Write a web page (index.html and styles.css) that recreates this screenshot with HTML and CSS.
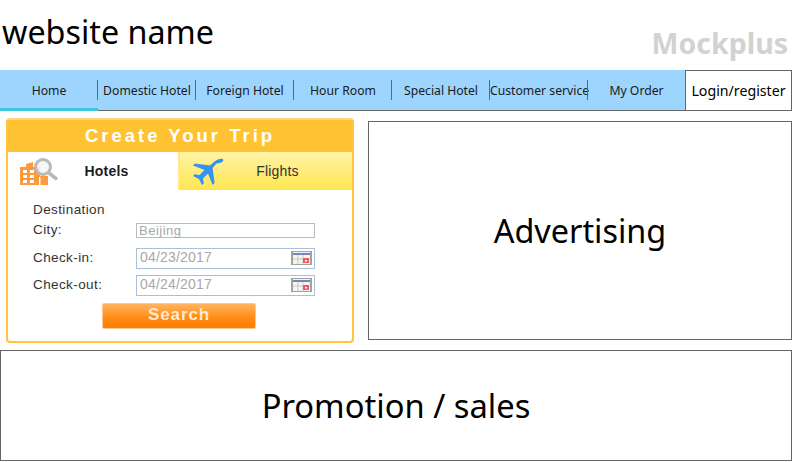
FILE: index.html
```html
<!DOCTYPE html>
<html lang="en">
<head>
  <meta charset="UTF-8">
  <title>website name</title>
  <meta name="viewport" content="width=device-width, initial-scale=1.0">
  <link rel="stylesheet" href="styles.css">
</head>
<body>
  <!-- Header -->
  <header class="siteHeader">
    <div class="siteName">website name</div>
    <div class="brand">Mockplus</div>
  </header>

  <!-- Nav -->
  <nav class="navBar">
    <ul class="navList">
      <li class="navItem active">Home</li>
      <li class="navItem">Domestic Hotel</li>
      <li class="navItem">Foreign Hotel</li>
      <li class="navItem">Hour Room</li>
      <li class="navItem">Special Hotel</li>
      <li class="navItem">Customer service</li>
      <li class="navItem">My Order</li>
    </ul>
    <div class="loginBox">Login/register</div>
  </nav>

  <!-- Search widget and advertising -->
  <main class="mainRow">
    <section class="tripWidget">
      <h2 class="tripTitle">Create Your Trip</h2>
      <div class="tabs">
        <div class="tab tabHotels">
          <svg class="tabIcon" width="40" height="30" viewBox="0 0 40 30">
            <path d="M1 29V11h6V8l7-2v5h7v9h8v9z" fill="#ff9a3c"/>
            <g fill="#fff">
              <rect x="4" y="14" width="4" height="3"/><rect x="11" y="14" width="4" height="3"/>
              <rect x="4" y="19" width="4" height="3"/><rect x="11" y="19" width="4" height="3"/>
              <rect x="4" y="24" width="4" height="3"/><rect x="11" y="24" width="4" height="3"/>
              <rect x="20" y="21" width="1.5" height="8"/>
            </g>
            <circle cx="24" cy="11" r="7.5" fill="#f4f4f4" fill-opacity="0.85" stroke="#b9b9b9" stroke-width="3"/>
            <path d="M30 17l7 5.500" stroke="#b9b9b9" stroke-width="3.500" stroke-linecap="round"/>
          </svg>
          <span class="tabLabel">Hotels</span>
        </div>
        <div class="tab tabFlights">
          <svg class="tabIcon" width="32" height="28" viewBox="0 0 32 28">
            <path d="M31 1c-3-.6-6 .6-8.500 2.600L18 7.500 3 5.500 1 7.500 12.500 12 7.500 17l-5-.8L1 18l6 3 3 6 1.800-1.500-.8-5 5-5 4.600 11.500 2-2-2-15 3.900-4.500C31 5 31.600 3 31 1z" fill="#3593ee"/>
          </svg>
          <span class="tabLabel">Flights</span>
        </div>
      </div>

      <form class="tripForm">
        <div class="formHeading">Destination</div>
        <div class="formRow cityRow">
          <label class="formLabel">City:</label>
          <div class="textInput">Beijing</div>
        </div>
        <div class="formRow dateRow">
          <label class="formLabel">Check-in:</label>
          <div class="dateInput">
            04/23/2017
            <svg class="calIcon" width="21" height="14" viewBox="0 0 21 14">
              <rect width="21" height="14" fill="#a3a39a"/>
              <rect x="2" y="1" width="17" height="12" fill="#f4f4f0"/>
              <rect x="2" y="2" width="17" height="2" fill="#6f86c8"/>
              <path d="M7 4v9M12 4v9M2 8h17" stroke="#c9c9c9"/>
              <rect x="12" y="7" width="6" height="5" fill="#ee5a68"/>
              <rect x="14" y="9" width="2" height="1.500" fill="#fff"/>
            </svg>
          </div>
        </div>
        <div class="formRow dateRow">
          <label class="formLabel">Check-out:</label>
          <div class="dateInput">
            04/24/2017
            <svg class="calIcon" width="21" height="14" viewBox="0 0 21 14">
              <rect width="21" height="14" fill="#a3a39a"/>
              <rect x="2" y="1" width="17" height="12" fill="#f4f4f0"/>
              <rect x="2" y="2" width="17" height="2" fill="#6f86c8"/>
              <path d="M7 4v9M12 4v9M2 8h17" stroke="#c9c9c9"/>
              <rect x="12" y="7" width="6" height="5" fill="#ee5a68"/>
              <rect x="14" y="9" width="2" height="1.500" fill="#fff"/>
            </svg>
          </div>
        </div>
        <div class="searchBtn">Search</div>
      </form>
    </section>

    <section class="adBox">Advertising</section>
  </main>

  <section class="promoBox">Promotion / sales</section>
</body>
</html>
```

FILE: styles.css
```css
/* Base Styles */
body {
  margin: 0;
  padding: 0;
  width: 793px;
  background: #fff;
  color: #000;
  font-family: "Noto Sans", "Open Sans", sans-serif;
}
/* Header */
.siteHeader {
  height: 70px;
  box-sizing: border-box;
  display: flex;
  justify-content: space-between;
  padding: 9px 5px 0 2px;
}
.siteName {
  font-size: 32.300px;
  line-height: 44px;
}
.brand {
  font-size: 28.500px;
  font-weight: 700;
  line-height: 40px;
  margin-top: 14px;
  color: #d2d2d2;
}
/* Nav */
.navBar {
  display: flex;
  height: 41px;
  width: 792px;
  box-sizing: border-box;
}
.navList {
  display: flex;
  width: 685px;
  margin: 0;
  padding: 0;
  box-sizing: border-box;
  list-style: none;
  background: #9dd5ff;
  border-bottom: 1px solid #666;
}
.navItem {
  position: relative;
  width: 98px;
  height: 41px;
  font-size: 12.200px;
  line-height: 41px;
  text-align: center;
  white-space: nowrap;
  color: #1a1a1a;
}
.navItem + .navItem::before {
  content: "";
  position: absolute;
  left: -1px;
  top: 10px;
  height: 20px;
  width: 1px;
  background: #666;
}
.navItem:last-child {
  width: 97px;
}
.navItem.active {
  box-shadow: inset 0 -3px 0 #3cc7dd;
}
.loginBox {
  flex: 1;
  box-sizing: border-box;
  border: 1px solid #666;
  font-size: 14.200px;
  line-height: 39px;
  text-align: center;
}
/* Main row */
.mainRow {
  display: flex;
  align-items: flex-start;
  width: 792px;
  padding: 7px 0 0 6px;
  box-sizing: border-box;
}
.tripWidget {
  width: 348px;
  height: 225px;
  box-sizing: border-box;
  border: 2px solid #ffc53d;
  border-top-color: #ffd27f;
  border-radius: 4px;
  font-family: "Liberation Sans", Arial, sans-serif;
}
.tripTitle {
  margin: 0;
  height: 32px;
  background: #ffc233;
  color: #fff;
  font-size: 18.500px;
  font-weight: 700;
  letter-spacing: 3px;
  line-height: 32px;
  text-align: center;
}
.tabs {
  display: flex;
  height: 38px;
}
.tab {
  position: relative;
  box-sizing: border-box;
  display: flex;
  align-items: center;
  justify-content: center;
  font-size: 14px;
  letter-spacing: 0.200px;
}
.tabHotels {
  width: 170px;
  font-weight: 700;
  padding-left: 27px;
  color: #1c1c28;
}
.tabFlights {
  flex: 1;
  padding-left: 23px;
  border-left: 2px solid #ffe98a;
  background: linear-gradient(#fff4a6, #ffe650);
  color: #333;
}
.tabIcon {
  position: absolute;
  left: 11px;
  top: 4px;
}
.tabFlights .tabIcon {
  left: 12px;
  top: 6px;
}
/* Form */
.tripForm {
  padding: 12px 0 0 25px;
  font-size: 13.500px;
  letter-spacing: 0.400px;
  color: #333;
}
.formHeading {
  line-height: 16px;
}
.formRow {
  display: flex;
  align-items: center;
}
.cityRow {
  height: 17px;
  margin-top: 4px;
}
.dateRow {
  height: 21px;
  margin-top: 6px;
}
.cityRow + .dateRow {
  margin-top: 9px;
}
.formLabel {
  width: 103px;
  padding-bottom: 2px;
}
.textInput {
  width: 179px;
  height: 15px;
  box-sizing: border-box;
  border: 1px solid #bbb;
  padding-left: 2px;
  font-size: 13px;
  letter-spacing: 0.500px;
  line-height: 13px;
  color: #a8a8a8;
}
.dateInput {
  position: relative;
  width: 179px;
  height: 21px;
  box-sizing: border-box;
  border: 1px solid #a9c0d8;
  padding-left: 3px;
  font-size: 14px;
  line-height: 17px;
  letter-spacing: 0.200px;
  color: #a8a8a8;
}
.calIcon {
  position: absolute;
  right: 2px;
  top: 2px;
}
.searchBtn {
  width: 154px;
  height: 26px;
  box-sizing: border-box;
  margin: 7px 0 0 69px;
  border: 1px solid #ffc890;
  border-radius: 2px;
  background: linear-gradient(#ffb45e, #ff8a14 60%, #ff8000);
  color: #ffe9d0;
  font-size: 17px;
  font-weight: 700;
  letter-spacing: 0.900px;
  line-height: 22px;
  text-align: center;
}
/* Placeholders */
.adBox {
  width: 424px;
  height: 219px;
  margin: 3px 0 0 14px;
  box-sizing: border-box;
  border: 1px solid #666;
  font-size: 32.400px;
  line-height: 217px;
  text-align: center;
}
.promoBox {
  width: 792px;
  height: 111px;
  margin-top: 7px;
  box-sizing: border-box;
  border: 1px solid #666;
  font-size: 32.700px;
  line-height: 109px;
  text-align: center;
}
```
